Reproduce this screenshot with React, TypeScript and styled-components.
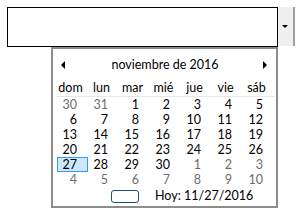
import React from "react";
import styled, { createGlobalStyle } from "styled-components";

const GlobalStyle = createGlobalStyle`
  html, body {
    margin: 0;
    padding: 0;
    background: #ffffff;
  }
  body {
    font-family: Lato, "Noto Sans", "Liberation Sans", sans-serif;
  }
`;

const DAY_NAMES = ["dom", "lun", "mar", "mié", "jue", "vie", "sáb"];

type Day = { n: number; other?: boolean; selected?: boolean };

const buildWeeks = (): Day[][] => {
  const days: Day[] = [];
  days.push({ n: 30, other: true }, { n: 31, other: true });
  for (let i = 1; i <= 30; i++) days.push({ n: i, selected: i === 27 });
  for (let i = 1; i <= 10; i++) days.push({ n: i, other: true });
  const weeks: Day[][] = [];
  for (let w = 0; w < 6; w++) weeks.push(days.slice(w * 7, w * 7 + 7));
  return weeks;
};

export default function App() {
  const weeks = buildWeeks();
  return (
    <>
      <GlobalStyle />
      <Page>
        <Combo>
          <TextBox />
          <DropButton>
            <DownArrow />
          </DropButton>
        </Combo>
        <Popup>
          <Header>
            <NavArrow dir="left" />
            <MonthTitle>noviembre de 2016</MonthTitle>
            <NavArrow dir="right" />
          </Header>
          <DayNames>
            {DAY_NAMES.map((d) => (
              <DayName key={d}>{d}</DayName>
            ))}
          </DayNames>
          <Weeks>
            {weeks.map((week, wi) => (
              <Week key={wi}>
                {week.map((d, di) => (
                  <DayCell key={di} $other={d.other} $selected={d.selected}>
                    {d.n}
                  </DayCell>
                ))}
              </Week>
            ))}
          </Weeks>
          <TodayRow>
            <TodayMark />
            <TodayText>Hoy: 11/27/2016</TodayText>
          </TodayRow>
        </Popup>
      </Page>
    </>
  );
}

const Page = styled.div`
  position: relative;
  width: 303px;
  height: 217px;
  padding: 7px 0 0 7px;
  box-sizing: border-box;
`;

const Combo = styled.div`
  display: flex;
  align-items: flex-start;
`;

const TextBox = styled.div`
  width: 271px;
  height: 40px;
  border: 1px solid #000000;
  box-sizing: border-box;
  background: #ffffff;
`;

const DropButton = styled.div`
  width: 17px;
  height: 39px;
  background: #f0f0f0;
  border-right: 2px solid #a0a0a0;
  box-sizing: border-box;
  display: flex;
  align-items: center;
  justify-content: center;
`;

const DownArrow = styled.div`
  width: 0;
  height: 0;
  border-left: 3px solid transparent;
  border-right: 3px solid transparent;
  border-top: 3px solid #000000;
  margin-right: 1px;
`;

const Popup = styled.div`
  position: absolute;
  left: 51px;
  top: 47px;
  width: 227px;
  height: 161px;
  box-sizing: border-box;
  border: 2px solid #8c8c8c;
  background: #ffffff;
  padding: 0 4px 0 4px;
  display: flex;
  flex-direction: column;
  color: #000000;
  font-size: 12.5px;
`;

const Header = styled.div`
  height: 32px;
  display: flex;
  align-items: center;
  justify-content: space-between;
  padding: 0 5px 0 4px;
`;

const NavArrow = styled.div<{ dir: "left" | "right" }>`
  width: 0;
  height: 0;
  border-top: 4px solid transparent;
  border-bottom: 4px solid transparent;
  ${({ dir }) =>
    dir === "left"
      ? "border-right: 4px solid #000000;"
      : "border-left: 4px solid #000000;"}
`;

const MonthTitle = styled.span`
  line-height: 16px;
  margin-left: 2px;
`;

const DayNames = styled.div`
  display: grid;
  grid-template-columns: repeat(7, 31px);
  height: 15px;
  width: 217px;
  border-bottom: 1px solid #e6e6e6;
`;

const DayName = styled.span`
  text-align: center;
  padding-right: 4px;
  line-height: 14px;
`;

const Weeks = styled.div`
  display: flex;
  flex-direction: column;
`;

const Week = styled.div`
  display: grid;
  grid-template-columns: repeat(7, 31px);
  height: 15px;
`;

const DayCell = styled.span<{ $other?: boolean; $selected?: boolean }>`
  text-align: right;
  padding-right: 11px;
  line-height: 15px;
  box-sizing: border-box;
  color: ${({ $other }) => ($other ? "#6d6d6d" : "#000000")};
  ${({ $selected }) =>
    $selected &&
    `
    background: #cce8ff;
    outline: 1px solid #3399ff;
    outline-offset: -1px;
    border: 1px dotted #000000;
    line-height: 13px;
    padding-right: 10px;
  `}
`;

const TodayRow = styled.div`
  display: flex;
  align-items: center;
  height: 18px;
  padding-left: 54px;
  gap: 16px;
`;

const TodayMark = styled.div`
  width: 28px;
  height: 13px;
  box-sizing: border-box;
  border: 1px solid #1e4a87;
  border-radius: 3px;
`;

const TodayText = styled.span`
  line-height: 16px;
`;
